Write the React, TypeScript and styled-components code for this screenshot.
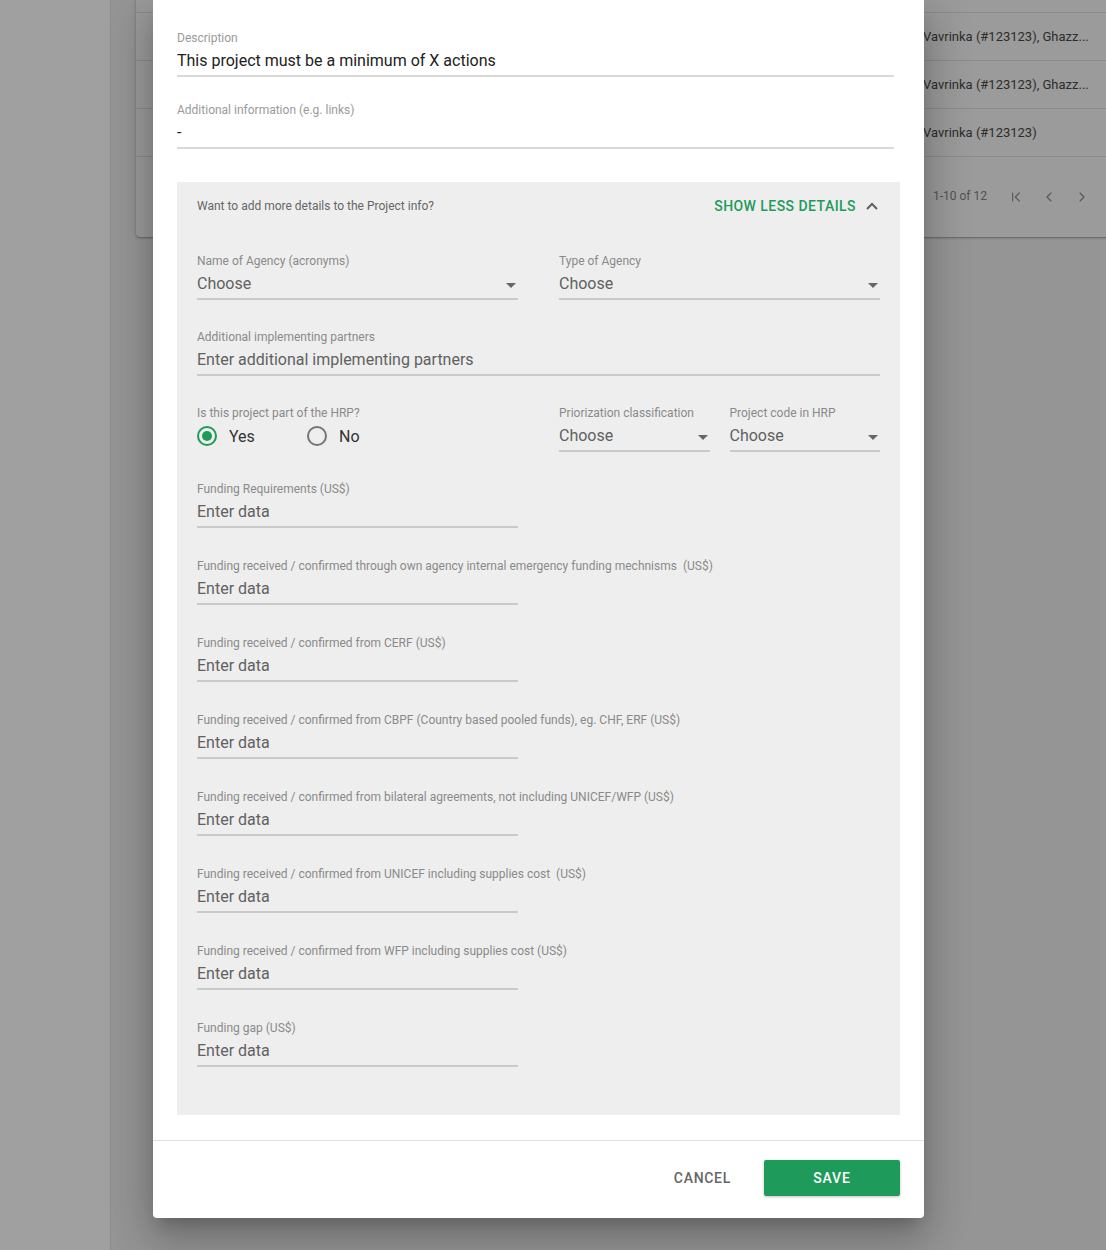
import React from 'react'
import styled, { createGlobalStyle } from 'styled-components'
import { ChevronFirst, ChevronLeft, ChevronRight } from 'lucide-react'

const GREEN = '#1e9b5a'

const GlobalStyle = createGlobalStyle`
    body {
        margin: 0;
        font-family: Roboto, "Liberation Sans", Arial, sans-serif;
        -webkit-font-smoothing: antialiased;
    }
`

const Screen = styled.div`
    position: relative;
    display: flex;
    height: 1250px;
    overflow: hidden;
    background: #959595;
`

const Sidebar = styled.aside`
    width: 110px;
    flex-shrink: 0;
    background: #a0a0a0;
    border-right: 1px solid #8d8d8d;
`

const Main = styled.main`
    flex: 1;
    padding-left: 25px;
`

const TableCard = styled.div`
    margin-top: -35px;
    margin-right: -8px;
    background: #9b9b9b;
    border-radius: 4px;
    box-shadow: 0 1px 3px rgba(0, 0, 0, 0.25), 0 1px 1px rgba(0, 0, 0, 0.12);
`

const TableRow = styled.div`
    display: grid;
    grid-template-columns: 1fr 191px;
    height: 47px;
    border-bottom: 1px solid #8c8c8c;
    align-items: center;
`

const Cell = styled.div`
    font-size: 13px;
    color: #2c2c2c;
    white-space: nowrap;
    overflow: hidden;
`

const Pagination = styled.div`
    height: 80px;
    display: flex;
    align-items: center;
    justify-content: flex-end;
    padding-right: 16px;
`

const PageText = styled.span`
    font-size: 12px;
    color: #515151;
    margin-right: 12px;
    margin-top: -2px;
`

const PageButton = styled.span`
    width: 33px;
    display: flex;
    justify-content: center;
    color: #555;
`

const Dialog = styled.section`
    position: absolute;
    left: 153px;
    top: 0;
    width: 771px;
    background: #fff;
    border-radius: 0 0 4px 4px;
    box-shadow: 0 11px 15px -7px rgba(0, 0, 0, 0.2), 0 24px 38px 3px rgba(0, 0, 0, 0.14),
        0 9px 46px 8px rgba(0, 0, 0, 0.12);
`

const DialogBody = styled.div`
    padding: 31px 24px 25px;
`

const Field = styled.div<{ $mt?: number; $inset?: number }>`
    margin-top: ${(p) => p.$mt ?? 0}px;
    margin-right: ${(p) => p.$inset ?? 0}px;
    min-width: 0;
`

const FieldLabel = styled.div<{ $onWhite?: boolean }>`
    font-size: 12px;
    line-height: 14px;
    color: ${(p) => (p.$onWhite ? '#9a9a9a' : '#8a8a8a')};
    white-space: pre;
`

const FieldControl = styled.div<{ $flat?: boolean }>`
    height: 30px;
    display: flex;
    align-items: center;
    border-bottom: 2px solid ${(p) => (p.$flat ? 'transparent' : 'rgba(0, 0, 0, 0.15)')};
`

const FieldValue = styled.span<{ $dark?: boolean }>`
    flex: 1;
    font-size: 16px;
    color: ${(p) => (p.$dark ? '#212121' : '#616161')};
`

const Caret = styled.svg`
    width: 10px;
    height: 5px;
    margin: 4px 2px 0 0;
`

const DetailsPanel = styled.div`
    margin-top: 33px;
    background: #eeeeee;
    padding: 0 20px 48px;
`

const PanelHeader = styled.div`
    height: 46px;
    padding-top: 1px;
    display: flex;
    align-items: center;
    justify-content: space-between;
`

const PanelHint = styled.span`
    font-size: 12px;
    color: #666;
`

const ToggleLink = styled.button`
    display: flex;
    align-items: center;
    gap: 10px;
    border: 0;
    background: none;
    padding: 0 2px 0 0;
    font-family: inherit;
    font-size: 14px;
    font-weight: 500;
    letter-spacing: 0.45px;
    color: ${GREEN};
    text-transform: uppercase;
    cursor: pointer;
`

const TopFields = styled.div`
    margin-top: 25px;
    display: flex;
    flex-direction: column;
    gap: 30px;
`

const TwoCols = styled.div<{ $gap: number }>`
    display: grid;
    grid-template-columns: 1fr 1fr;
    column-gap: ${(p) => p.$gap}px;
`

const FundingList = styled.div`
    margin-top: 30px;
    display: flex;
    flex-direction: column;
    gap: 31px;
    width: calc(50% - 20.5px);
`

const RadioGroup = styled.div`
    display: flex;
    align-items: center;
    margin-top: 2px;
`

const RadioItem = styled.label`
    width: 110px;
    display: flex;
    align-items: center;
    gap: 12px;
    font-size: 16px;
    color: #333;
`

const RadioCircle = styled.span<{ $checked?: boolean }>`
    width: 16px;
    height: 16px;
    border-radius: 50%;
    border: 2px solid ${(p) => (p.$checked ? GREEN : '#757575')};
    display: flex;
    align-items: center;
    justify-content: center;
    &::after {
        content: '';
        width: 10px;
        height: 10px;
        border-radius: 50%;
        background: ${(p) => (p.$checked ? GREEN : 'transparent')};
    }
`

const DialogFooter = styled.footer`
    border-top: 1px solid #e0e0e0;
    padding: 19px 24px 22px;
    display: flex;
    justify-content: flex-end;
    gap: 17px;
`

const TextButton = styled.button`
    height: 36px;
    min-width: 88px;
    padding: 0 16px;
    border: 0;
    background: none;
    font-family: inherit;
    font-size: 14px;
    font-weight: 500;
    letter-spacing: 0.7px;
    color: #666;
`

const PrimaryButton = styled.button`
    height: 36px;
    width: 136px;
    border: 0;
    border-radius: 2px;
    background: ${GREEN};
    color: #fff;
    font-family: inherit;
    font-size: 14px;
    font-weight: 500;
    letter-spacing: 0.8px;
    box-shadow: 0 1px 3px rgba(0, 0, 0, 0.25);
`

function DropCaret() {
    return (
        <Caret viewBox="0 0 10 5">
            <path d="M0 0h10L5 5z" fill="#666" />
        </Caret>
    )
}

function SelectField({ label }: { label: string }) {
    return (
        <Field>
            <FieldLabel>{label}</FieldLabel>
            <FieldControl>
                <FieldValue>Choose</FieldValue>
                <DropCaret />
            </FieldControl>
        </Field>
    )
}

function TextField({ label, value = 'Enter data' }: { label: string; value?: string }) {
    return (
        <Field>
            <FieldLabel>{label}</FieldLabel>
            <FieldControl>
                <FieldValue>{value}</FieldValue>
            </FieldControl>
        </Field>
    )
}

const rows = [
    '',
    'Vavrinka (#123123), Ghazz...',
    'Vavrinka (#123123), Ghazz...',
    'Vavrinka (#123123)',
]

const funding = [
    'Funding Requirements (US$)',
    'Funding received / confirmed through own agency internal emergency funding mechnisms  (US$)',
    'Funding received / confirmed from CERF (US$)',
    'Funding received / confirmed from CBPF (Country based pooled funds), eg. CHF, ERF (US$)',
    'Funding received / confirmed from bilateral agreements, not including UNICEF/WFP (US$)',
    'Funding received / confirmed from UNICEF including supplies cost  (US$)',
    'Funding received / confirmed from WFP including supplies cost (US$)',
    'Funding gap (US$)',
]

export default function App() {
    return (
        <>
            <GlobalStyle />
            <Screen>
                <Sidebar />
                <Main>
                    <TableCard>
                        {rows.map((r, i) => (
                            <TableRow key={i}>
                                <div />
                                <Cell>{r}</Cell>
                            </TableRow>
                        ))}
                        <Pagination>
                            <PageText>1-10 of 12</PageText>
                            <PageButton><ChevronFirst size={16} strokeWidth={1.6} /></PageButton>
                            <PageButton><ChevronLeft size={16} strokeWidth={1.6} /></PageButton>
                            <PageButton><ChevronRight size={16} strokeWidth={1.6} /></PageButton>
                        </Pagination>
                    </TableCard>
                </Main>

                <Dialog>
                    <DialogBody>
                        <Field $inset={6}>
                            <FieldLabel $onWhite>Description</FieldLabel>
                            <FieldControl>
                                <FieldValue $dark>This project must be a minimum of X actions</FieldValue>
                            </FieldControl>
                        </Field>
                        <Field $mt={26} $inset={6}>
                            <FieldLabel $onWhite>Additional information (e.g. links)</FieldLabel>
                            <FieldControl>
                                <FieldValue $dark>-</FieldValue>
                            </FieldControl>
                        </Field>

                        <DetailsPanel>
                            <PanelHeader>
                                <PanelHint>Want to add more details to the Project info?</PanelHint>
                                <ToggleLink>
                                    Show less details
                                    <svg width="12" height="8" viewBox="0 0 12 8">
                                        <path d="M1 7l5-5 5 5" fill="none" stroke="#616161" strokeWidth="2" />
                                    </svg>
                                </ToggleLink>
                            </PanelHeader>

                            <TopFields>
                                <TwoCols $gap={41}>
                                    <SelectField label="Name of Agency (acronyms)" />
                                    <SelectField label="Type of Agency" />
                                </TwoCols>
                                <TextField label="Additional implementing partners" value="Enter additional implementing partners" />
                                <TwoCols $gap={41}>
                                    <Field>
                                        <FieldLabel>Is this project part of the HRP?</FieldLabel>
                                        <FieldControl $flat>
                                            <RadioGroup>
                                                <RadioItem>
                                                    <RadioCircle $checked />
                                                    Yes
                                                </RadioItem>
                                                <RadioItem>
                                                    <RadioCircle />
                                                    No
                                                </RadioItem>
                                            </RadioGroup>
                                        </FieldControl>
                                    </Field>
                                    <TwoCols $gap={20}>
                                        <SelectField label="Priorization classification" />
                                        <SelectField label="Project code in HRP" />
                                    </TwoCols>
                                </TwoCols>
                            </TopFields>

                            <FundingList>
                                {funding.map((f) => (
                                    <TextField key={f} label={f} />
                                ))}
                            </FundingList>
                        </DetailsPanel>
                    </DialogBody>
                    <DialogFooter>
                        <TextButton>CANCEL</TextButton>
                        <PrimaryButton>SAVE</PrimaryButton>
                    </DialogFooter>
                </Dialog>
            </Screen>
        </>
    )
}
